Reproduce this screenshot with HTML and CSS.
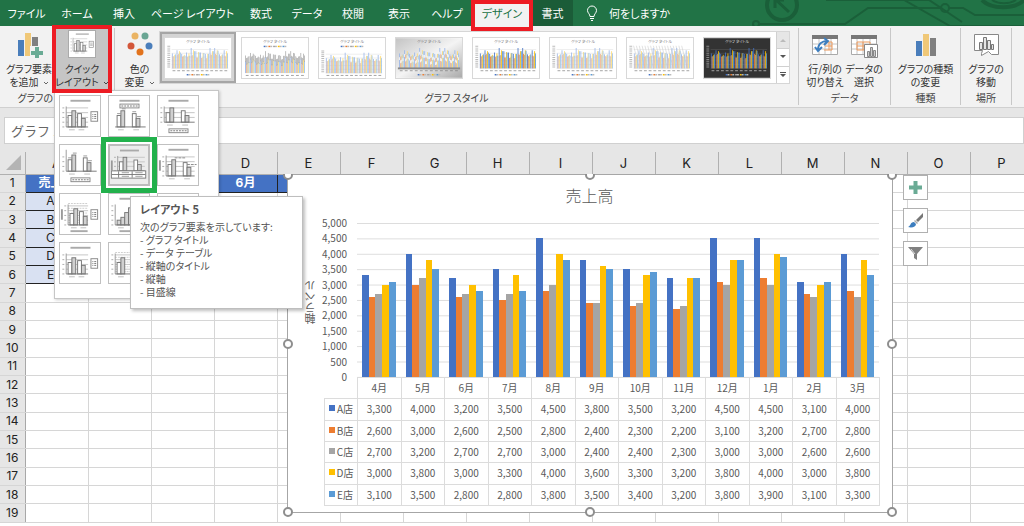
FILE: index.html
```html
<!DOCTYPE html>
<html lang="ja">
<head>
<meta charset="utf-8">
<title>売上高</title>
<link rel="stylesheet" href="styles.css">
</head>
<body>
<nav class="tabs">
  <svg class="tabs-art" width="300" height="26" viewBox="0 0 300 26" fill="none" stroke="#1a5f39" stroke-width="2" aria-hidden="true">
    <circle cx="58" cy="5" r="15" stroke-width="4"/><path d="M65 12L52 0M51 8V0H60" stroke-width="3"/>
    <circle cx="32" cy="24" r="3"/><path d="M36 24H121L144 8H217M225 8H239L251 15H300M102 0H205M180 0L226 26H300M205 0L238 22"/>
    <circle cx="221" cy="8" r="4"/><path d="M258 0A24 14 0 0 0 300 0" stroke-width="4"/><path d="M268 0A15 8 0 0 0 292 0"/>
  </svg>
  <button class="tab w-file">ファイル</button>
  <button class="tab w-home">ホーム</button>
  <button class="tab">挿入</button>
  <button class="tab w-page">ページ レイアウト</button>
  <button class="tab">数式</button>
  <button class="tab">データ</button>
  <button class="tab">校閲</button>
  <button class="tab">表示</button>
  <button class="tab w-help">ヘルプ</button>
  <button class="tab w-design selected">デザイン<span class="mark mark-tab"></span></button>
  <button class="tab w-format">書式</button>
  <button class="tab tell-me"><svg width="12" height="16" viewBox="0 0 12 16" fill="none" stroke="#fff"><path d="M4 11.500C4 9 1.500 8 1.500 5.500a4.500 4.500 0 0 1 9 0C10.500 8 8 9 8 11.500zM4 13.500h4M5 15.500h2"/></svg>何をしますか</button>
</nav>

<section class="ribbon">
  <div class="group g-layout">
    <div class="tools">
      <button class="tool t-add">
        <svg width="28" height="28" viewBox="0 0 28 28"><path fill="#4a7ebb" d="M3 10h6v16H3z"/><path fill="#f0c878" d="M10 3h6v23h-6z"/><path fill="#808080" d="M17 7h6v12h-6z"/><path fill="#f2f2f2" d="M15 16h13v12H15z"/><path fill="#6aab95" d="M20 17h4v4h4v4h-4v4h-4v-4h-4v-4h4z"/></svg>
        <span>グラフ要素<br>を追加 <svg width="6" height="4" viewBox="0 0 6 4" fill="none" stroke="#666"><path d="M1 1l2 2 2-2"/></svg></span>
      </button>
      <div class="drop">
        <button class="tool t-quick">
          <svg class="mini" data-layout="1" width="28" height="28" viewBox="0 0 42 42"></svg>
          <span>クイック<br>レイアウト <svg width="6" height="4" viewBox="0 0 6 4" fill="none" stroke="#444"><path d="M1 1l2 2 2-2"/></svg></span>
        </button>
        <div class="menu">
          <button class="layout" aria-label="レイアウト 1"><svg class="mini" data-layout="1" viewBox="0 0 42 42"></svg></button>
          <button class="layout" aria-label="レイアウト 2"><svg class="mini" data-layout="2" viewBox="0 0 42 42"></svg></button>
          <button class="layout" aria-label="レイアウト 3"><svg class="mini" data-layout="3" viewBox="0 0 42 42"></svg></button>
          <button class="layout" aria-label="レイアウト 4"><svg class="mini" data-layout="4" viewBox="0 0 42 42"></svg></button>
          <button class="layout hover" aria-label="レイアウト 5"><svg class="mini" data-layout="5" viewBox="0 0 42 42"></svg><span class="mark mark-layout"></span></button>
          <button class="layout" aria-label="レイアウト 6"><svg class="mini" data-layout="6" viewBox="0 0 42 42"></svg></button>
          <button class="layout" aria-label="レイアウト 7"><svg class="mini" data-layout="7" viewBox="0 0 42 42"></svg></button>
          <button class="layout" aria-label="レイアウト 8"><svg class="mini" data-layout="8" viewBox="0 0 42 42"></svg></button>
          <button class="layout" aria-label="レイアウト 9"><svg class="mini" data-layout="9" viewBox="0 0 42 42"></svg></button>
          <button class="layout" aria-label="レイアウト 10"><svg class="mini" data-layout="10" viewBox="0 0 42 42"></svg></button>
          <button class="layout" aria-label="レイアウト 11"><svg class="mini" data-layout="11" viewBox="0 0 42 42"></svg></button>
          <div class="tip" role="tooltip">
            <h2 class="tip-title">レイアウト 5</h2>
            <p class="tip-text">次のグラフ要素を示しています:<br>- グラフ タイトル<br>- データ テーブル<br>- 縦軸のタイトル<br>- 縦軸<br>- 目盛線</p>
          </div>
        </div>
        <span class="mark mark-quick"></span>
      </div>
    </div>
    <div class="caption">グラフのレイアウト</div>
  </div>
  <div class="group g-style">
    <div class="tools">
      <button class="tool t-color">
        <svg width="28" height="28" viewBox="0 0 28 28"><circle cx="9" cy="6" r="3.500" fill="#eab464"/><circle cx="19" cy="6" r="3.500" fill="#6aa694"/><circle cx="5" cy="16" r="3.500" fill="#d3573a"/><circle cx="23" cy="16" r="3.500" fill="#4a7ebb"/><circle cx="14" cy="22" r="3.500" fill="#e2731c"/></svg>
        <span>色の<br>変更 <svg width="6" height="4" viewBox="0 0 6 4" fill="none" stroke="#666"><path d="M1 1l2 2 2-2"/></svg></span>
      </button>
      <div class="gallery">
        <div class="styles">
          <button class="style current" aria-label="スタイル 1"><svg class="thumb" data-style="0" viewBox="0 0 70 42"></svg></button>
          <button class="style" aria-label="スタイル 2"><svg class="thumb" data-style="1" viewBox="0 0 70 42"></svg></button>
          <button class="style" aria-label="スタイル 3"><svg class="thumb" data-style="2" viewBox="0 0 70 42"></svg></button>
          <button class="style" aria-label="スタイル 4"><svg class="thumb" data-style="3" viewBox="0 0 70 42"></svg></button>
          <button class="style" aria-label="スタイル 5"><svg class="thumb" data-style="4" viewBox="0 0 70 42"></svg></button>
          <button class="style" aria-label="スタイル 6"><svg class="thumb" data-style="5" viewBox="0 0 70 42"></svg></button>
          <button class="style" aria-label="スタイル 7"><svg class="thumb" data-style="6" viewBox="0 0 70 42"></svg></button>
          <button class="style" aria-label="スタイル 8"><svg class="thumb" data-style="7" viewBox="0 0 70 42"></svg></button>
        </div>
        <div class="scroller">
          <button class="step off" aria-label="上へ"><svg width="6" height="4" viewBox="0 0 6 4"><path d="M0 4L3 1l3 3z" fill="#bbb"/></svg></button>
          <button class="step" aria-label="下へ"><svg width="6" height="4" viewBox="0 0 6 4"><path d="M0 0l3 3 3-3z" fill="#555"/></svg></button>
          <button class="step" aria-label="その他"><svg width="6" height="6" viewBox="0 0 6 6"><path d="M0 0h6v1H0zM0 2l3 3 3-3z" fill="#555"/></svg></button>
        </div>
      </div>
    </div>
    <div class="caption">グラフ スタイル</div>
  </div>
  <div class="group g-data">
    <div class="tools">
      <button class="tool">
        <svg width="28" height="28" viewBox="0 0 28 28"><path fill="#fff" stroke="#aaa" d="M1.500 5.500h25v19h-25z"/><path fill="#777" d="M1 5h26v4H1z"/><path d="M2 14h24M2 19h24M8 9v15M14 9v15M20 9v15" stroke="#c4c4c4" fill="none"/><path d="M14 12h7v8h-8M18 12v8M14 16h7" fill="none" stroke="#ed9a5c"/><path d="M7 20C7 14 11 11 16 11M13 8l4 3-4 4M4 17l3 4 4-4" fill="none" stroke="#3d7ebf" stroke-width="2"/></svg>
        <span>行/列の<br>切り替え</span>
      </button>
      <button class="tool">
        <svg width="28" height="28" viewBox="0 0 28 28"><path fill="#fff" stroke="#aaa" d="M1.500 5.500h25v19h-25z"/><path fill="#777" d="M1 5h26v4H1z"/><path d="M2 14h24M2 19h24M7 9v15M13 9v15M20 9v15" stroke="#c4c4c4" fill="none"/><path d="M7 12h13v8H7zM7 16h13M13 12v8" fill="none" stroke="#ed9a5c"/><path fill="#fff" stroke="#888" d="M14.500 14.500h13v13h-13z"/><path fill="#ccc" stroke="#888" d="M17.500 21.500h2v5h-2zM20.500 17.500h2v9h-2zM23.500 20.500h2v6h-2z"/></svg>
        <span>データの<br>選択</span>
      </button>
    </div>
    <div class="caption">データ</div>
  </div>
  <div class="group g-kind">
    <div class="tools">
      <button class="tool">
        <svg width="28" height="28" viewBox="0 0 28 28"><path fill="#4a7ebb" d="M4 11h6v15H4z"/><path fill="#f0c878" d="M11 4h6v22h-6z"/><path fill="#808080" d="M18 8h6v18h-6z"/></svg>
        <span>グラフの種類<br>の変更</span>
      </button>
    </div>
    <div class="caption">種類</div>
  </div>
  <div class="group g-place">
    <div class="tools">
      <button class="tool">
        <svg width="28" height="28" viewBox="0 0 28 28"><path fill="#fff" stroke="#888" d="M2.500 4.500h24v20h-7l-3-3-7 4v-2l1-3h-8z"/><path fill="#e4e4e4" stroke="#777" d="M7.500 12.500h3v7h-3zM11.500 7.500h3v12h-3zM15.500 10.500h3v9h-3zM19.500 14.500h2v5h-2z"/></svg>
        <span>グラフの<br>移動</span>
      </button>
    </div>
    <div class="caption">場所</div>
  </div>
</section>

<div class="formula-row">
  <input class="name-box" aria-label="名前ボックス" value="グラフ 1">
  <input class="formula" aria-label="数式バー">
</div>

<main class="sheet">
  <table class="cells">
    <thead>
      <tr><th class="corner"><svg width="16" height="16" viewBox="0 0 16 16"><path d="M15 0v15H0z" fill="#b4b4b4"/></svg></th><th>A</th><th>B</th><th>C</th><th>D</th><th>E</th><th>F</th><th>G</th><th>H</th><th>I</th><th>J</th><th>K</th><th>L</th><th>M</th><th>N</th><th>O</th><th>P</th></tr>
    </thead>
    <tbody id="rows"></tbody>
  </table>

  <div class="viewport">
    <figure class="chart">
      <figcaption class="chart-title">売上高</figcaption>
      <div class="plot-row">
        <div class="axis-title">軸ラベル</div>
        <div class="ticks"><span>5,000</span><span>4,500</span><span>4,000</span><span>3,500</span><span>3,000</span><span>2,500</span><span>2,000</span><span>1,500</span><span>1,000</span><span>500</span><span>0</span></div>
        <div class="plot" id="plot"></div>
      </div>
      <table class="data" id="data"></table>
      <i class="handle nw"></i><i class="handle n"></i><i class="handle ne"></i><i class="handle w"></i><i class="handle e"></i><i class="handle sw"></i><i class="handle s"></i><i class="handle se"></i>
    </figure>
    <div class="chart-tools">
      <button class="chart-tool" aria-label="グラフ要素"><svg width="15" height="15" viewBox="0 0 15 15"><path d="M5.500 1h4v4.500H14v4H9.500V14h-4V9.500H1v-4h4.500z" fill="#6aab95"/></svg></button>
      <button class="chart-tool" aria-label="グラフ スタイル"><svg width="17" height="17" viewBox="0 0 17 17"><path d="M16 1v4l-5 5-2-2z" fill="#777"/><path d="M8 8l3 3-1 1-3-3z" fill="#aaa"/><path d="M1 15c3-1 2-5 6-5l2 2c0 3-4 4-8 3z" fill="#3d7ebf"/></svg></button>
      <button class="chart-tool" aria-label="グラフ フィルター"><svg width="17" height="17" viewBox="0 0 17 17"><path d="M1 2h15l-6 7v6l-3-2V9z" fill="#808080"/><path d="M4 4l4 5" stroke="#ddd"/></svg></button>
    </div>
  </div>
</main>
<script src="app.js"></script>
</body>
</html>
```
FILE: styles.css
```css
* { box-sizing: border-box; }
body {
  margin: 0;
  height: 100vh;
  overflow: hidden;
  display: flex;
  flex-direction: column;
  background: #e6e6e6;
  font-family: "Noto Sans CJK JP", sans-serif;
  font-size: 10px;
  color: #444;
}
button {
  font: inherit;
  color: inherit;
  background: none;
  border: 0;
  padding: 0;
  font-feature-settings: "palt";
}
svg { display: block; }

/* tabs */
.tabs { position: relative; display: flex; flex: none; height: 26px; background: #217346; color: #fff; font-size: 11px; }
.tabs-art { position: absolute; right: 0; top: 0; }
.tab { position: relative; width: 46px; white-space: nowrap; line-height: 26px; }
.w-file { width: 53px; }
.w-home { width: 48px; }
.w-page { width: 91px; }
.w-help { width: 50px; }
.w-design { width: 60px; }
.w-format { width: 41px; background: #1b5c38; }
.tab.selected { background: #f2f2f2; color: #217346; }
.tell-me { width: auto; display: flex; align-items: center; gap: 11px; padding-left: 13px; }

/* annotation frames */
.mark { position: absolute; pointer-events: none; }
.mark-tab { inset: 0 -1px -5px -1px; border: 4px solid #ed1c24; z-index: 3; }
.mark-quick { inset: -3px; border: 4px solid #ed1c24; z-index: 4; }
.mark-layout { inset: -9px; border: 5px solid #22b14c; z-index: 2; }

/* ribbon */
.ribbon { display: flex; flex: none; height: 82px; padding: 2px 12px 0 0; background: #f2f2f2; border-bottom: 1px solid #d0d0d0; }
.group { position: relative; display: flex; flex-direction: column; justify-content: space-between; border-right: 1px solid #c8c8c8; margin-bottom: 2px; }
.tools { display: flex; justify-content: center; }
.caption { text-align: center; line-height: 14px; font-feature-settings: "palt"; white-space: nowrap; }
.g-layout { width: 115px; }
.g-style { flex: 1; min-width: 0; }
.g-data { width: 92px; }
.g-kind { width: 70px; }
.g-place { width: 51px; }
.tool { display: flex; flex-direction: column; align-items: center; width: 39px; padding: 2px 0 2px; line-height: 13px; white-space: nowrap; color: #333; }
.tool > span { margin-top: 4px; }
.tool span svg { display: inline-block; margin-left: 2px; vertical-align: middle; }
.t-add { width: 52px; }
.drop { position: relative; }
.t-quick { width: 54px; background: #c5c5c5; }
.t-quick .mini { background: #fff; border: 1px solid #ababab; }
.g-layout .tools { justify-content: flex-end; padding-right: 5px; }
.g-style .tools { justify-content: flex-start; padding-left: 5px; }

.gallery { display: flex; flex: 1; min-width: 0; height: 53px; margin: 3px 8px 0 0; background: #fff; border: 1px solid #d6d6d6; }
.styles { display: flex; flex: 1; min-width: 0; overflow: hidden; gap: 1px; }
.style { display: flex; flex: none; width: 76px; padding: 2px; border: 2px solid transparent; align-items: center; justify-content: center; }
.style.current { border-color: #a6a6a6; background: #d4d4d4; }
.thumb { width: 70px; height: 42px; border: 1px solid #d8d8d8; background: #fff; }
.scroller { display: flex; flex-direction: column; width: 13px; border-left: 1px solid #d0d0d0; }
.step { flex: 1; display: flex; align-items: center; justify-content: center; border-bottom: 1px solid #d0d0d0; }
.step:last-child { border-bottom: 0; }
.step.off { background: #e6e6e6; }

/* layout menu */
.menu {
  position: absolute; top: 62px; left: -1px; z-index: 3;
  display: grid; grid-template-columns: repeat(3, 42px); gap: 7px;
  width: 165px; padding: 4px 4px 14px;
  background: #fff; border: 1px solid #c6c6c6; box-shadow: 1px 1px 3px rgba(0,0,0,.2);
}
.layout { position: relative; height: 42px; border: 1px solid #c0c0c0; background: #fff; }
.layout.hover { background: #dedede; border: 2px solid #bcbcbc; }
.mini { background: #fff; }
.layout.hover .mini { background: #ececec; }
.tip {
  position: absolute; left: 75px; top: 105px; z-index: 5;
  width: 173px; padding: 3px 9px 10px;
  background: #fff; border: 1px solid #bebebe; box-shadow: 2px 2px 3px rgba(0,0,0,.25);
  font-feature-settings: "palt"; color: #555;
}
.tip-title { margin: 0 0 2px; font-size: 11px; line-height: 18px; }
.tip-text { margin: 0; line-height: 13px; white-space: nowrap; }

/* formula bar */
.formula-row { display: flex; flex: none; gap: 8px; padding: 9px 0 8px 4px; }
.formula-row input { height: 27px; border: 1px solid #d0d0d0; background: #fff; font: 13px "Noto Sans CJK JP", sans-serif; color: #666; padding: 0 6px; }
.name-box { width: 140px; }
.formula { flex: 1; min-width: 0; }

/* worksheet */
.sheet { position: relative; flex: 1; min-height: 0; overflow: hidden; background: #fff; }
.cells { width: 1033px; height: 371px; table-layout: fixed; border-collapse: collapse; font-family: Inter, "Noto Sans CJK JP", sans-serif; font-size: 12px; line-height: 14px; color: #222; }
.cells th, .cells td { padding: 0; border: 1px solid #d6d6d6; text-align: center; font-weight: 400; white-space: nowrap; }
.cells thead th { width: 63px; height: 22px; background: #e6e6e6; border-color: #b0b0b0; border-top: 0; font-size: 13px; }
.cells thead .corner { width: 25px; border-left: 0; }
.corner svg { margin-left: 6px; }
.cells tbody th { background: #e6e6e6; border-right-color: #a8a8a8; border-left: 0; }
.cells .head { background: #4472c4; color: #fff; font-weight: 700; border-color: #222; }
.cells .shop { background: #d9e1f2; border-color: #222; }

/* chart */
.viewport { position: absolute; inset: 22px 0 0 0; overflow: hidden; }
.chart { position: absolute; left: 287px; top: 0; width: 606px; margin: 0; padding: 8px 13px 6px 12px; background: #fff; border: 1px solid #a6a6a6; color: #595959; }
.chart-title { text-align: center; font-size: 16px; font-weight: 300; line-height: 24px; }
.plot-row { display: flex; height: 154px; margin-top: 16px; }
.axis-title { width: 20px; writing-mode: vertical-rl; transform: rotate(180deg); line-height: 20px; font-size: 11px; padding-top: 53px; }
.ticks { display: flex; flex-direction: column; justify-content: space-between; width: 27px; margin: -7px 10px -7px 0; text-align: right; line-height: 14px; }
.plot { flex: 1; display: flex; background-image: linear-gradient(#dcdcdc 1px, transparent 1px); background-size: 100% 10%; }
.month { flex: 1; display: flex; align-items: flex-end; padding: 0 5px; }
.bar { flex: 1; }
.s0 { background: #4472c4; }
.s1 { background: #ed7d31; }
.s2 { background: #a5a5a5; }
.s3 { background: #ffc000; }
.s4 { background: #5b9bd5; }
.data { width: 556px; height: 129px; margin-left: 24px; table-layout: fixed; border-collapse: collapse; }
.data th, .data td { padding: 0; border: 1px solid #dcdcdc; text-align: center; font-weight: 400; line-height: 14px; }
.data .key { width: 33px; white-space: nowrap; }
.data .blank { border-left: 0; border-top: 0; }
.swatch { display: inline-block; width: 6px; height: 6px; margin-right: 2px; vertical-align: 2px; }
.handle { position: absolute; width: 10px; height: 10px; border: 2px solid #8e8e8e; border-radius: 50%; background: #fff; }
.nw, .n, .ne { top: -5px; }
.w, .e { top: 50%; margin-top: -5px; }
.sw, .s, .se { bottom: -5px; }
.nw, .w, .sw { left: -5px; }
.ne, .e, .se { right: -5px; }
.n, .s { left: 50%; margin-left: -5px; }
.chart-tools { position: absolute; left: 903px; top: 1px; display: flex; flex-direction: column; gap: 8px; }
.chart-tool { display: flex; align-items: center; justify-content: center; width: 25px; height: 25px; background: #fff; border: 1px solid #b0b0b0; }
```
FILE: app.js
```js
const months = ['4月', '5月', '6月', '7月', '8月', '9月', '10月', '11月', '12月', '1月', '2月', '3月'];
const shops = [
  ['A店', 3300, 4000, 3200, 3500, 4500, 3800, 3500, 3200, 4500, 4500, 3100, 4000],
  ['B店', 2600, 3000, 2600, 2500, 2800, 2400, 2300, 2200, 3100, 3200, 2700, 2800],
  ['C店', 2700, 3200, 2700, 2700, 3000, 2400, 2400, 2300, 3000, 3000, 2600, 2600],
  ['D店', 3000, 3800, 3000, 3300, 4000, 3600, 3300, 3200, 3800, 4000, 3000, 3800],
  ['E店', 3100, 3500, 2800, 2800, 3800, 3500, 3400, 3200, 3800, 3900, 3100, 3300]
];
const fmt = n => n.toLocaleString('en-US');

// worksheet rows
const heads = ['売上高', '4月', '5月', '6月', '7月'];
let rows = '';
for (let r = 1; r <= 19; r++) {
  rows += `<tr><th>${r}</th>`;
  for (let c = 0; c < 16; c++) {
    if (r === 1 && c < 5) rows += `<td class="head">${heads[c]}</td>`;
    else if (r > 1 && r < 7 && c === 0) rows += `<td class="shop">${shops[r - 2][0]}</td>`;
    else rows += '<td></td>';
  }
  rows += '</tr>';
}
document.getElementById('rows').innerHTML = rows;

// clustered columns
document.getElementById('plot').innerHTML = months.map((m, i) =>
  '<div class="month">' + shops.map((s, k) => `<div class="bar s${k}" style="height:${s[i + 1] / 50}%"></div>`).join('') + '</div>').join('');

// data table
document.getElementById('data').innerHTML =
  '<tr><td class="key blank"></td>' + months.map(m => `<th>${m}</th>`).join('') + '</tr>' +
  shops.map((s, k) => `<tr><th class="key"><i class="swatch s${k}"></i>${s[0]}</th>` +
    s.slice(1).map(v => `<td>${fmt(v)}</td>`).join('') + '</tr>').join('');

// layout previews
const rect = (x, y, w, h, f, s) => `<rect x="${x}" y="${y}" width="${w}" height="${h}" fill="${f}"${s ? ` stroke="${s}"` : ''}/>`;
const line = (d, c = '#999', extra = '') => `<path d="${d}" fill="none" stroke="${c}" ${extra}/>`;
function mini(n) {
  let o = '';
  const has = list => list.includes(n);
  const base = has([3, 4, 5]) ? 27.5 : 32.5;
  const x0 = has([5, 6, 7]) ? 8.5 : 6.5;
  const x1 = has([1, 7, 10]) ? 29.5 : 38.5;
  if (!has([4, 7, 11])) o += rect(11, 4, 21, 2, '#aaa');
  if (!has([2, 4, 8])) for (let y = base - 5; y > 10; y -= 5) o += line(`M${x0} ${y}H${x1}`, '#c4c4c4');
  if (has([7, 11])) for (let y = base - 2.5; y > 8; y -= 5) o += line(`M${x0} ${y}H${x1}`, '#ccc', 'stroke-dasharray="2 1"');
  if (n !== 2) {
    o += line(`M${x0} ${n === 4 ? 5 : 11}V${base}`);
    for (let y = base; y > 11; y -= 5) o += line(`M${x0 - 4} ${y}h2`, '#aaa');
  }
  const b = x0 + 2;
  const gap = has([1, 7, 10]) ? 10 : 16;
  if (n === 8) [5, 8, 13, 18, 14, 9].forEach((h, i) => { o += rect(b + i * 4, base - h, 4, h, '#d4d4d4', '#777'); });
  else {
    const t = n === 5 || n === 3 ? 15 : 17;
    o += rect(b, base - t + 5, 4, t - 5, '#fff', '#777') + rect(b + 4, base - t, 4, t, '#d0d0d0', '#777');
    o += rect(b + gap, base - t + 3, 4, t - 3, '#fff', '#777') + rect(b + gap + 4, base - t + 8, 4, t - 8, '#d0d0d0', '#777');
  }
  o += line(`M${x0} ${base}H${x1}`, '#777');
  if (has([2, 4])) o += line(`M${b} ${base - 14}h4M${b + 5} ${base - 19}h4M${b + gap} ${base - 16}h4M${b + gap + 5} ${base - 11}h4`);
  if (n === 6) o += line(`M${b + 7} ${base - 19}h12M${b + gap + 4} ${base - 12}h10`, '#888', 'stroke-dasharray="3 1"');
  if (n !== 5) o += line(`M${b + 1} ${base + 3}h6M${b + gap + 1} ${base + 3}h6`, '#bbb');
  if (has([1, 7, 10])) o += rect(32.5, 16.5, 7, 10, '#fff', '#888') + line('M34 19.500h1M36 19.500h2M34 21.500h1M36 21.500h2M34 23.500h1M36 23.500h2', '#777');
  if (n === 2) o += rect(11.5, 8.5, 20, 4, '#fff', '#888') + line('M13 10.500h17', '#777', 'stroke-dasharray="2 1"');
  if (has([3, 4])) o += rect(11.5, 34.5, 20, 4, '#fff', '#888') + line('M13 36.500h17', '#777', 'stroke-dasharray="2 1"');
  if (has([5, 6, 7])) o += rect(1, 16, 2, 11, '#999');
  if (has([7, 8])) o += rect(11, 38, 18, 2, '#aaa');
  if (n === 5) o += rect(1.5, 27.5, 38, 8, '#fff', '#777') + line('M2 31.500H39M9.500 28V35M24.500 28V35', '#777') + line('M13 29.500h8M28 29.500h8M13 33.500h8M28 33.500h8', '#999');
  return o;
}
document.querySelectorAll('.mini').forEach(el => { el.innerHTML = mini(+el.dataset.layout); });

// style previews
const light = ['#9db8e8', '#f4b68f', '#c4c4c4', '#ffdc75', '#9fc6ea'];
const full = ['#4472c4', '#ed7d31', '#a5a5a5', '#ffc000', '#5b9bd5'];
const themes = [
  { c: light }, { c: light, top: 1, lab: '#aaa' }, { c: light, top: 1 }, { c: light, bg: 'url(#fade)', lab: '#fff' },
  { c: full }, { c: light }, { c: light, hatch: 1 }, { c: full, bg: '#333', ink: '#ddd' }
];
function thumb(i) {
  const t = themes[i], ink = t.ink || '#777', base = t.top ? 37 : 32;
  let o = '<defs><linearGradient id="fade" x2="1" y2="1"><stop stop-color="#c4c4c4"/><stop offset=".5" stop-color="#f4f4f4"/><stop offset="1" stop-color="#aaa"/></linearGradient></defs>';
  o += rect(0, 0, 70, 42, t.bg || '#fff');
  o += `<text x="35" y="5" font-size="4" text-anchor="middle" fill="${ink}">グラフ タイトル</text>`;
  const x0 = i === 1 || i === 3 ? 3 : 7, w = (67 - x0) / 12;
  const tall = 24;
  if (i !== 1 && i !== 3) {
    for (let y = base; y > base - tall; y -= 4) o += line(`M${x0} ${y}H67`, i === 7 ? '#555' : '#e2e2e2', 'stroke-width=".6"');
    o += line(`M4 ${base - tall}V${base}`, ink, 'stroke-width="3" stroke-dasharray="1 1" opacity=".5"');
  }
  if (t.hatch) for (let x = x0; x < 60; x += 3) o += line(`M${x} 8l6 24`, '#ccc', 'stroke-width=".6"');
  for (let m = 0; m < 12; m++) shops.forEach((s, k) => {
    const h = s[m + 1] / 5000 * tall * (i === 1 ? .8 : 1);
    const x = x0 + m * w + .3 + k * (w - .6) / 5;
    o += rect(x.toFixed(2), (base - h).toFixed(2), ((w - .6) / 5).toFixed(2), h.toFixed(2), t.c[k]);
    if (t.lab) o += rect(x.toFixed(2), (base - h - (i === 1 ? 6 : -4)).toFixed(2), .8, i === 1 ? 7 : 3, t.lab);
  });
  if (i === 3) o += rect(2, 31, 66, 2, '#888');
  o += line(`M${x0 + 1} ${base + 2.5}H67`, ink, `stroke-dasharray="3 ${(w - 3).toFixed(2)}" opacity=".7"`);
  const ly = t.top ? 9 : 39;
  for (let k = 0; k < 5; k++) o += rect(23 + k * 5, ly - 1, 2, 1.5, full[k]) + rect(25 + k * 5, ly - 1, 2, 1.5, '#bbb');
  return o;
}
document.querySelectorAll('.thumb').forEach(el => { el.innerHTML = thumb(+el.dataset.style); });
```
